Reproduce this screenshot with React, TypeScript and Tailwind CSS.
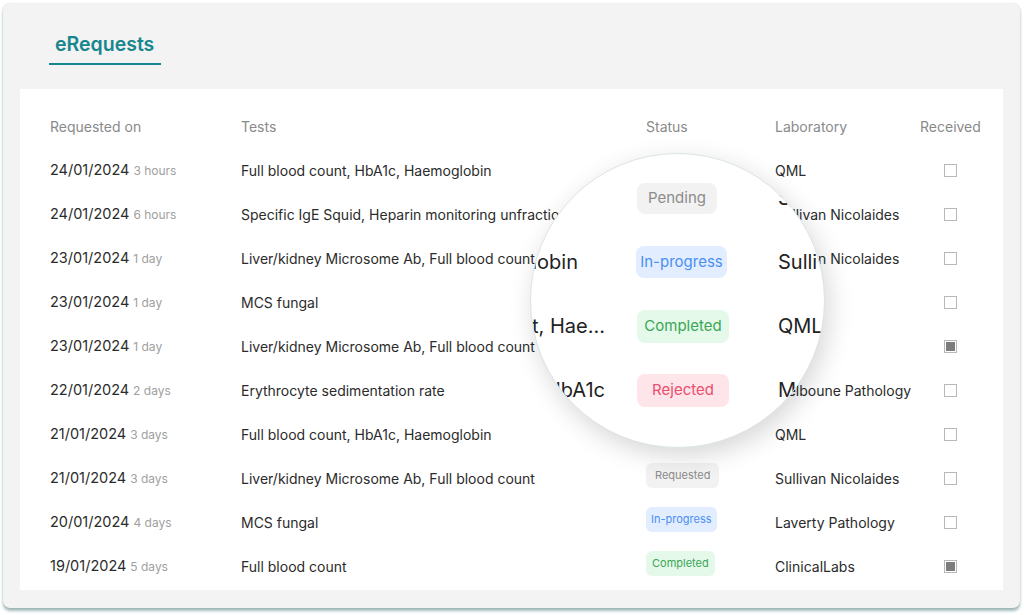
import React from "react"

type Row = {
  date: string
  ago: string
  tests: string
  status?: "Requested" | "In-progress" | "Completed"
  lab: string
  received: boolean
}

const ROWS: Row[] = [
  { date: "24/01/2024", ago: "3 hours", tests: "Full blood count, HbA1c, Haemoglobin", lab: "QML", received: false },
  { date: "24/01/2024", ago: "6 hours", tests: "Specific IgE Squid, Heparin monitoring unfractionated", lab: "Sullivan Nicolaides", received: false },
  { date: "23/01/2024", ago: "1 day", tests: "Liver/kidney Microsome Ab, Full blood count", lab: "Sullivan Nicolaides", received: false },
  { date: "23/01/2024", ago: "1 day", tests: "MCS fungal", lab: "QML", received: false },
  { date: "23/01/2024", ago: "1 day", tests: "Liver/kidney Microsome Ab, Full blood count", lab: "QML", received: true },
  { date: "22/01/2024", ago: "2 days", tests: "Erythrocyte sedimentation rate", lab: "Melboune Pathology", received: false },
  { date: "21/01/2024", ago: "3 days", tests: "Full blood count, HbA1c, Haemoglobin", lab: "QML", received: false },
  { date: "21/01/2024", ago: "3 days", tests: "Liver/kidney Microsome Ab, Full blood count", status: "Requested", lab: "Sullivan Nicolaides", received: false },
  { date: "20/01/2024", ago: "4 days", tests: "MCS fungal", status: "In-progress", lab: "Laverty Pathology", received: false },
  { date: "19/01/2024", ago: "5 days", tests: "Full blood count", status: "Completed", lab: "ClinicalLabs", received: true },
]

const BADGE: Record<string, string> = {
  Requested: "bg-[#f2f2f2] text-[#8a8a8a] px-[9px]",
  "In-progress": "bg-[#e2eeff] text-[#4b8ff2] px-[5px]",
  Completed: "bg-[#e4f9ea] text-[#3ba656] px-[6px]",
}

function Checkbox({ checked }: { checked: boolean }) {
  return (
    <div className="h-[13px] w-[13px] border border-[#b8b8b8] bg-white p-[1px]">
      {checked ? <div className="h-full w-full bg-[#7c7c7c]" /> : null}
    </div>
  )
}

function Magnifier() {
  return (
    <div className="absolute left-[530px] top-[153px] h-[295px] w-[295px] overflow-hidden rounded-full border border-[#dce4e4] bg-white shadow-[4px_8px_26px_rgba(0,0,0,0.16)]">
      <div className="mt-[12px] flex flex-col text-[20px] text-[#222]">
        <div className="flex h-[64px] items-center">
          <div className="w-[74px] shrink-0" />
          <div className="ml-[32px] w-[141px] shrink-0">
            <span className="flex h-[31px] w-[80px] items-center justify-center rounded-lg bg-[#f2f2f2] text-[15px] text-[#8c8c8c]">
              {"Pending"}
            </span>
          </div>
          <span className="shrink-0 whitespace-nowrap">{"Sullivan Nicolaides"}</span>
        </div>
        <div className="flex h-[64px] items-center">
          <div className="flex w-[74px] shrink-0 justify-end pr-[27px]">
            <span className="shrink-0 whitespace-nowrap">{"Full blood count, HbA1c, Haemoglobin"}</span>
          </div>
          <div className="ml-[31px] w-[142px] shrink-0">
            <span className="flex h-[32px] w-[91px] items-center justify-center rounded-lg bg-[#e2eeff] text-[15px] text-[#4b8ff2]">
              {"In-progress"}
            </span>
          </div>
          <span className="shrink-0 whitespace-nowrap">{"Sullivan Nicolaides"}</span>
        </div>
        <div className="flex h-[64px] items-center">
          <div className="flex w-[74px] shrink-0 justify-end">
            <span className="shrink-0 whitespace-nowrap">{"Full blood count, Hae..."}</span>
          </div>
          <div className="ml-[32px] w-[141px] shrink-0">
            <span className="flex h-[33px] w-[92px] items-center justify-center rounded-lg bg-[#e4f9ea] text-[15px] text-[#3ba656]">
              {"Completed"}
            </span>
          </div>
          <span className="shrink-0 whitespace-nowrap">{"QML"}</span>
        </div>
        <div className="flex h-[64px] items-center">
          <div className="flex w-[74px] shrink-0 justify-end">
            <span className="shrink-0 whitespace-nowrap">{"Full blood count, HbA1c"}</span>
          </div>
          <div className="ml-[32px] w-[141px] shrink-0">
            <span className="flex h-[33px] w-[92px] items-center justify-center rounded-lg bg-[#fde5e9] text-[15px] text-[#ee4d6e]">
              {"Rejected"}
            </span>
          </div>
          <span className="shrink-0 whitespace-nowrap">{"Melboune Pathology"}</span>
        </div>
      </div>
    </div>
  )
}

export default function App() {
  return (
    <div className="relative h-[615px] w-[1024px] overflow-hidden bg-white pl-[3px] pt-[3px] font-['Inter',sans-serif]">
      <div className="flex h-[605px] w-[1017px] flex-col rounded-[7px] bg-[#f3f3f3] px-[17px] shadow-[0_0_1px_rgba(0,0,0,0.2),0_3px_3px_rgba(90,130,130,0.55)]">
        <header className="h-[86px] pt-[27px]">
          <div className="ml-[29px] w-[112px] border-b-2 border-[#17868f] pb-[5px] pl-[6px]">
            <h1 className="text-[19.5px] font-semibold leading-7 text-[#17868f]">{"eRequests"}</h1>
          </div>
        </header>

        <div className="h-[501px] w-[983px] bg-white pl-[30px] pt-[16px]">
          <div className="grid h-[43px] grid-cols-[191px_405px_129px_145px_60px] items-center text-[14px] text-[#8a8a8a]">
            <span>{"Requested on"}</span>
            <span>{"Tests"}</span>
            <span>{"Status"}</span>
            <span>{"Laboratory"}</span>
            <span className="text-center">{"Received"}</span>
          </div>
          {ROWS.map((r, i) => (
            <div
              key={i}
              className="grid h-[44px] grid-cols-[191px_405px_129px_145px_60px] items-center text-[14px] text-[#2b2b2b]"
            >
              <span className="whitespace-nowrap">
                <span className="text-[14.5px]">{r.date}</span>{" "}
                <span className="text-[12px] text-[#a0a0a0]">{r.ago}</span>
              </span>
              <span className="whitespace-nowrap">{r.tests}</span>
              <span>
                {r.status ? (
                  <span className={`mb-[6px] inline-flex h-[25px] items-center rounded-md text-[11px] ${BADGE[r.status]}`}>
                    {r.status}
                  </span>
                ) : null}
              </span>
              <span className="whitespace-nowrap">{r.lab}</span>
              <span className="flex justify-center">
                <Checkbox checked={r.received} />
              </span>
            </div>
          ))}
        </div>
      </div>

      <Magnifier />
    </div>
  )
}
